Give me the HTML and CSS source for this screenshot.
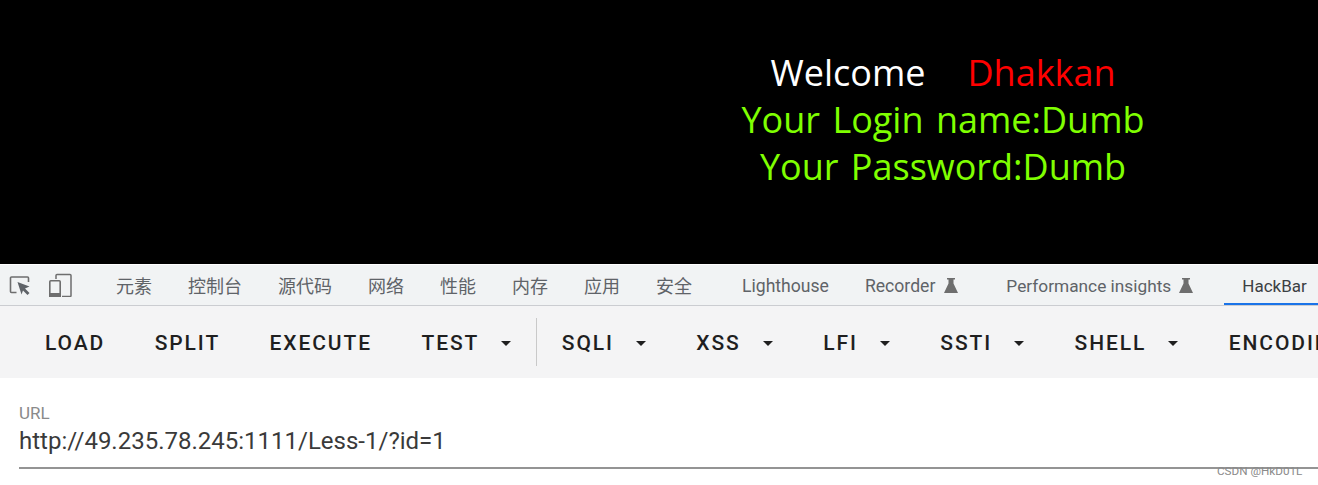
FILE: index.html
```html
<!DOCTYPE html>
<html lang="en">
<head>
  <meta charset="UTF-8">
  <meta name="viewport" content="width=device-width, initial-scale=1.0">
  <title>Less-1</title>
  <link rel="stylesheet" href="styles.css">
</head>
<body>

  <div class="page">
    <div class="welcome">
      <div><span class="white">Welcome</span><span class="red">Dhakkan</span></div>
      <div>Your Login name:Dumb</div>
      <div>Your Password:Dumb</div>
    </div>
  </div>

  <div class="devtools">
    <div class="dev-icons">
      <svg class="dev-icon" width="24" height="24" viewBox="0 0 24 24">
        <path d="M7.500 19.500H2.500a1 1 0 0 1-1-1V5a1 1 0 0 1 1-1H18.500a1 1 0 0 1 1 1v4" fill="none" stroke="#6e6e6e" stroke-width="1.600"/>
        <path d="M8.500 9 L20.500 13.500 L16 15.500 L20.500 20 L18.500 22 L14 17.500 L12.500 21.500 Z" fill="#5f6368"/>
      </svg>
      <svg class="dev-icon" width="24" height="24" viewBox="0 0 24 24">
        <path d="M8 6V2.500a1 1 0 0 1 1-1h13a1 1 0 0 1 1 1v20a1 1 0 0 1-1 1h-8" fill="none" stroke="#6e6e6e" stroke-width="1.500"/>
        <rect x="1.800" y="7.800" width="10.400" height="15.400" rx="1" fill="none" stroke="#6e6e6e" stroke-width="1.600"/>
        <rect x="1" y="20" width="12" height="4" fill="#6e6e6e"/>
      </svg>
    </div>
    <div class="dev-sep"></div>
    <div class="tabs">
      <span class="tab">元素</span>
      <span class="tab">控制台</span>
      <span class="tab">源代码</span>
      <span class="tab">网络</span>
      <span class="tab">性能</span>
      <span class="tab">内存</span>
      <span class="tab">应用</span>
      <span class="tab">安全</span>
      <span class="tab tab-en tab-wide">Lighthouse</span>
      <span class="tab tab-en">Recorder
        <svg class="flask" width="14" height="15" viewBox="0 0 14 15"><path d="M3 0h8v1.500H9.500v4L14 15H0L4.500 5.500v-4H3z" fill="#6e6e6e"/></svg>
      </span>
      <span class="tab tab-en tab-perf">Performance insights
        <svg class="flask" width="14" height="15" viewBox="0 0 14 15"><path d="M3 0h8v1.500H9.500v4L14 15H0L4.500 5.500v-4H3z" fill="#6e6e6e"/></svg>
      </span>
      <span class="tab tab-en tab-active">HackBar</span>
    </div>
  </div>

  <div class="toolbar">
    <button class="btn">LOAD</button>
    <button class="btn">SPLIT</button>
    <button class="btn">EXECUTE</button>
    <button class="btn">TEST<i class="arrow"></i></button>
    <div class="tool-sep"></div>
    <button class="btn">SQLI<i class="arrow"></i></button>
    <button class="btn">XSS<i class="arrow"></i></button>
    <button class="btn">LFI<i class="arrow"></i></button>
    <button class="btn">SSTI<i class="arrow"></i></button>
    <button class="btn">SHELL<i class="arrow"></i></button>
    <button class="btn">ENCODING<i class="arrow"></i></button>
  </div>

  <div class="url-box">
    <div class="url-label">URL</div>
    <div class="url-value">http://49.235.78.245:1111/Less-1/?id=1</div>
  </div>

  <div class="watermark">CSDN @HkD01L</div>

</body>
</html>
```

FILE: styles.css
```css
html, body {
  margin: 0;
  padding: 0;
  height: 485px;
  overflow: hidden;
  background: #fff;
  font-family: Roboto, "Noto Sans CJK SC", sans-serif;
}

.page {
  background: #000;
  height: 264px;
  padding-left: 568px;
  padding-top: 49px;
  box-sizing: border-box;
  margin-bottom: 1px;
}

.welcome {
  font-family: "Open Sans", sans-serif;
  font-size: 36px;
  line-height: 47px;
  word-spacing: 3px;
  color: #7fff00;
  text-align: center;
}

.white {
  color: #fff;
  margin-right: 42px;
}

.red {
  color: #ff0000;
}

/* devtools tab strip */
.devtools {
  display: flex;
  align-items: center;
  height: 40px;
  background: #f1f3f4;
  border-bottom: 1px solid #cbcdd1;
  white-space: nowrap;
  overflow: hidden;
}

.dev-icons {
  display: flex;
  align-items: center;
  gap: 15px;
  padding-left: 9px;
}

.dev-sep {
  width: 2px;
  height: 24px;
  background: #cbcdd1;
  margin-left: 16px;
  margin-right: 10px;
}

.tabs {
  display: flex;
  align-items: stretch;
  height: 40px;
}

.tab {
  display: flex;
  align-items: center;
  gap: 9px;
  padding: 0 18px;
  font-size: 18px;
  color: #5f6368;
}

.tab-en {
  font-size: 17.600px;
  padding-top: 1px;
  height: 39px;
}

.tab-wide {
  padding-left: 32px;
}

.tab-perf {
  font-size: 17.300px;
  padding-left: 30px;
  padding-right: 31px;
  gap: 8px;
}

.tab-active {
  font-size: 17px;
  color: #3c4043;
  box-shadow: inset 0 -2px 0 #1a73e8;
  padding-right: 30px;
}

/* hackbar buttons */
.toolbar {
  display: flex;
  align-items: center;
  height: 72px;
  background: #f4f4f5;
  white-space: nowrap;
  padding-left: 20.250px;
  overflow: hidden;
}

.btn {
  display: flex;
  align-items: center;
  flex: none;
  border: none;
  background: none;
  padding: 2px 24.750px 0;
  font-family: Roboto, sans-serif;
  font-weight: 500;
  font-size: 21px;
  letter-spacing: 1.900px;
  color: #1f1f1f;
}

.arrow {
  width: 0;
  height: 0;
  margin-left: 22px;
  margin-right: 1px;
  border-left: 5px solid transparent;
  border-right: 5px solid transparent;
  border-top: 5px solid #1f1f1f;
}

.tool-sep {
  flex: none;
  width: 1px;
  height: 48px;
  margin-left: -1px;
  background: #c9c9c9;
}

/* url field */
.url-box {
  margin-left: 19px;
  padding-top: 25px;
  height: 64px;
  border-bottom: 2px solid #949494;
}

.url-label {
  font-size: 17px;
  line-height: 20px;
  color: #8a8a8a;
}

.url-value {
  font-size: 24px;
  line-height: 36px;
  color: #3a3a3a;
}

.watermark {
  position: absolute;
  left: 1217px;
  top: 463px;
  font-size: 11.700px;
  line-height: 16px;
  color: #8a8a8a;
}
```
